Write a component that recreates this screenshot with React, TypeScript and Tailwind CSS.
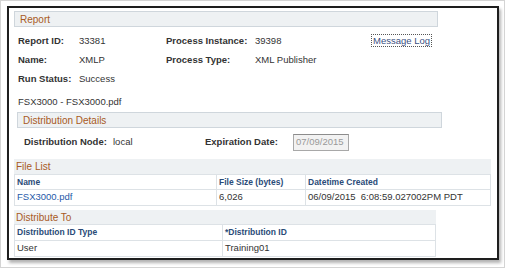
import React from "react";

const font = { fontFamily: '"Liberation Sans", Arial, sans-serif' };

function SectionBar({ title, className }: { title: string; className: string }) {
  return (
    <div className={`h-[16px] flex items-center bg-[#eef1f3] border border-[#cfd6dc] text-[10px] text-[#a85a24] ${className}`}>
      {title}
    </div>
  );
}

function Field({ label, value }: { label: string; value: string }) {
  return (
    <>
      <div className="font-bold text-[#333]">{label}</div>
      <div className="text-[#333]">{value}</div>
    </>
  );
}

export default function App() {
  return (
    <div style={font} className="w-[505px] h-[268px] bg-white border border-[#d4d4d4] overflow-hidden">
      <div className="mt-[5px] ml-[6px] w-[492px] h-[254px] border-2 border-[#1e1e1e] bg-white shadow-[2px_3px_3px_rgba(0,0,0,0.3)]">
        {/* Report */}
        <SectionBar title="Report" className="mt-[3px] ml-[5px] w-[424px] pl-[5px]" />
        <div className="mt-[5px] ml-[9px] grid grid-cols-[61px_87px_89px_117px_auto] auto-rows-[19px] items-center text-[9.5px]">
          <Field label="Report ID:" value="33381" />
          <Field label="Process Instance:" value="39398" />
          <div>
            <span className="text-[#3b4f7f] outline outline-1 outline-dotted outline-[#555] px-px">Message Log</span>
          </div>
          <Field label="Name:" value="XMLP" />
          <Field label="Process Type:" value="XML Publisher" />
          <div />
          <Field label="Run Status:" value="Success" />
        </div>

        {/* Output file */}
        <div className="mt-[5px] ml-[9px] h-[17px] flex items-center text-[9.5px] text-[#333]">FSX3000 - FSX3000.pdf</div>

        {/* Distribution Details */}
        <SectionBar title="Distribution Details" className="mt-[1px] ml-[8px] w-[425px] pl-[5px]" />
        <div className="mt-[5px] ml-[15px] h-[18px] flex items-center text-[9.5px] text-[#333]">
          <div className="w-[89px] font-bold">Distribution Node:</div>
          <div className="w-[92px]">local</div>
          <div className="w-[88px] font-bold">Expiration Date:</div>
          <div className="w-[56px] h-[17px] flex items-center pl-[2px] bg-[#f2f2f2] border border-[#a8a8a8] border-t-[#8c8c8c] text-[#999]">07/09/2015</div>
        </div>

        {/* File List */}
        <div className="mt-[8px] ml-[5px] w-[477px]">
          <div className="h-[15px] flex items-center pl-[2px] bg-[#eef1f3] text-[10px] text-[#a85a24]">File List</div>
          <table className="w-full border-collapse text-[9.5px]">
            <tbody>
              <tr className="h-[15px] text-[8.5px] font-bold text-[#2a4b78]">
                <td className="w-[202px] border border-[#dde2e6] pl-[2px]">Name</td>
                <td className="w-[89px] border border-[#dde2e6] pl-[2px]">File Size (bytes)</td>
                <td className="border border-[#dde2e6] pl-[2px]">Datetime Created</td>
              </tr>
              <tr className="h-[16px]">
                <td className="border border-[#dde2e6] pl-[2px] text-[#2559a8]">FSX3000.pdf</td>
                <td className="border border-[#dde2e6] pl-[2px] text-[#333]">6,026</td>
                <td className="border border-[#dde2e6] pl-[2px] text-[#333] whitespace-pre">06/09/2015  6:08:59.027002PM PDT</td>
              </tr>
            </tbody>
          </table>
        </div>

        {/* Distribute To */}
        <div className="mt-[4px] ml-[5px] w-[422px]">
          <div className="h-[14px] flex items-center pl-[2px] bg-[#eef1f3] text-[10px] text-[#a85a24]">Distribute To</div>
          <table className="w-full border-collapse text-[9.5px]">
            <tbody>
              <tr className="h-[16px] text-[8.5px] font-bold text-[#2a4b78]">
                <td className="w-[208px] border border-[#dde2e6] pl-[2px]">Distribution ID Type</td>
                <td className="border border-[#dde2e6] pl-[2px]">*Distribution ID</td>
              </tr>
              <tr className="h-[16px] text-[#333]">
                <td className="border border-[#dde2e6] pl-[2px]">User</td>
                <td className="border border-[#dde2e6] pl-[2px]">Training01</td>
              </tr>
            </tbody>
          </table>
        </div>
      </div>
    </div>
  );
}
